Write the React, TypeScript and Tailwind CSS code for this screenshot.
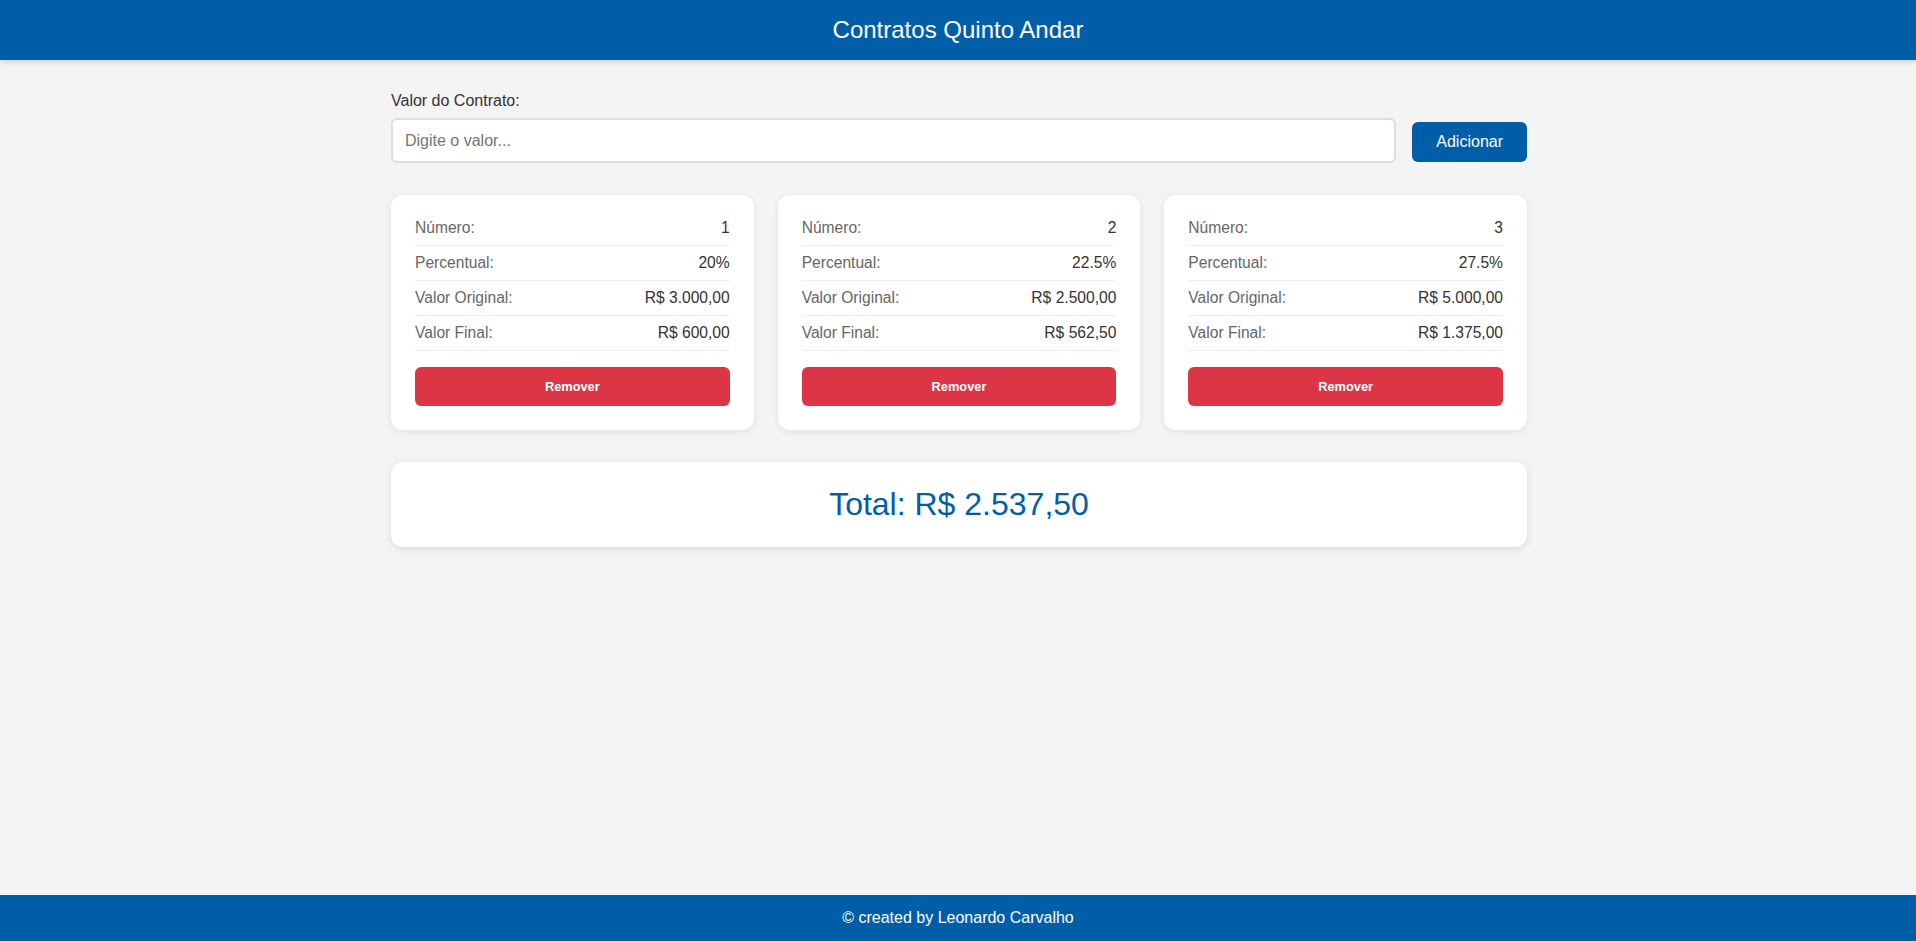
import { useState } from "react";

type Contrato = {
  numero: number;
  percentual: string;
  original: string;
  final: string;
};

const contratosIniciais: Contrato[] = [
  { numero: 1, percentual: "20%", original: "R$ 3.000,00", final: "R$ 600,00" },
  { numero: 2, percentual: "22.5%", original: "R$ 2.500,00", final: "R$ 562,50" },
  { numero: 3, percentual: "27.5%", original: "R$ 5.000,00", final: "R$ 1.375,00" },
];

function Linha({ label, value }: { label: string; value: string | number }) {
  return (
    <div className="flex justify-between items-center pb-2 mb-2 border-b border-[#eee] text-[15.6px] leading-[18px]">
      <span className="text-[#666]">{label}</span>
      <span className="text-[#333]">{value}</span>
    </div>
  );
}

export default function App() {
  const [contratos, setContratos] = useState<Contrato[]>(contratosIniciais);
  const [valor, setValor] = useState("");

  return (
    <div
      className="min-h-screen flex flex-col bg-[#f4f4f4]"
      style={{ fontFamily: '"Liberation Sans", Arial, sans-serif' }}
    >
      <header className="bg-[#005ea8] text-white text-center py-4 text-2xl leading-[28px] shadow-[0_2px_5px_rgba(0,0,0,0.15)]">
        Contratos Quinto Andar
      </header>

      <main className="flex-1 w-full max-w-[1200px] mx-auto pl-[33px] pr-[31px] pt-8">
        <div className="flex items-end gap-4 mb-8">
          <div className="flex-1 flex flex-col">
            <label className="text-base leading-[18px] text-[#333] mb-2">Valor do Contrato:</label>
            <input
              value={valor}
              onChange={(e) => setValor(e.target.value)}
              placeholder="Digite o valor..."
              className="w-full bg-white border-2 border-[#ddd] rounded-md px-3 py-[11.5px] text-base leading-[18px] text-[#333] placeholder:text-[#757575] outline-none"
            />
          </div>
          <button className="bg-[#005ea8] text-white text-base rounded-md px-6 py-[11px] leading-[18.4px] mb-[1px]">
            Adicionar
          </button>
        </div>

        <div className="grid grid-cols-3 gap-6 mb-8">
          {contratos.map((c) => (
            <div key={c.numero} className="bg-white rounded-xl p-6 shadow-[0_2px_8px_rgba(0,0,0,0.08)]">
              <Linha label="Número:" value={c.numero} />
              <Linha label="Percentual:" value={c.percentual} />
              <Linha label="Valor Original:" value={c.original} />
              <Linha label="Valor Final:" value={c.final} />
              <button
                onClick={() => setContratos(contratos.filter((x) => x.numero !== c.numero))}
                className="w-full mt-2 bg-[#dc3545] text-white font-bold text-[12.8px] rounded-md py-3 leading-[15px]"
              >
                Remover
              </button>
            </div>
          ))}
        </div>

        <div className="bg-white rounded-xl p-6 text-center text-[32px] leading-[37px] text-[#005ea8] shadow-[0_2px_8px_rgba(0,0,0,0.1)]">
          Total: R$ 2.537,50
        </div>
      </main>

      <footer className="bg-[#005ea8] text-white text-center text-base py-[14px] leading-[18px]">
        © created by Leonardo Carvalho
      </footer>
    </div>
  );
}
